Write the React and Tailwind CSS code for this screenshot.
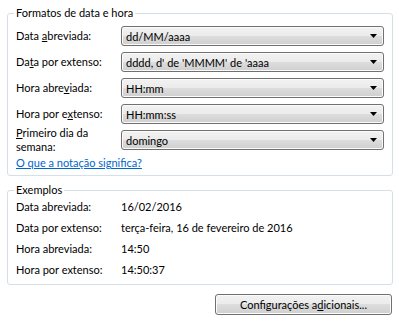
import { Fragment } from 'react';

const formatos = [
  { label: <>Data <u>a</u>breviada:</>, valor: 'dd/MM/aaaa' },
  { label: <>Da<u>t</u>a por extenso:</>, valor: "dddd, d' de 'MMMM' de 'aaaa" },
  { label: <>Hora abre<u>v</u>iada:</>, valor: 'HH:mm' },
  { label: <>Hora por e<u>x</u>tenso:</>, valor: 'HH:mm:ss' },
  { label: <><u>P</u>rimeiro dia da semana:</>, valor: 'domingo' },
];

const exemplos = [
  ['Data abreviada:', '16/02/2016'],
  ['Data por extenso:', 'terça-feira, 16 de fevereiro de 2016'],
  ['Hora abreviada:', '14:50'],
  ['Hora por extenso:', '14:50:37'],
];

function Combo({ valor }) {
  return (
    <div className="relative flex h-[20px] w-[263px] shrink-0 items-center rounded-[3px] border border-[#707070] bg-[linear-gradient(to_bottom,#f2f2f2_0%,#ebebeb_50%,#dddddd_50%,#cfcfcf_100%)] pl-[4px] shadow-[inset_0_0_0_1px_#fbfbfb]">
      <span className="leading-none">{valor}</span>
      <svg className="absolute right-[6px] top-[7px]" width="7" height="4" viewBox="0 0 7 4">
        <path d="M0 0 H7 L3.5 4 Z" fill="#000" />
      </svg>
    </div>
  );
}

export default function App() {
  return (
    <div className="w-[399px] h-[322px] bg-white pl-[7px] pr-[6px] pt-[5px] text-[11px] text-black font-['Lato','Liberation_Sans',sans-serif]">
      <fieldset className="rounded-[3px] border border-[#d5dfe5] pl-[8px] pr-[7px] pb-[4px]">
        <legend className="-ml-[2px] px-[2px] leading-[16px]">Formatos de data e hora</legend>
        <div className="mt-[5px] flex flex-col gap-[6px]">
          {formatos.map((f, i) => (
            <div key={i} className="flex h-[20px] items-center">
              <div className="w-[105px] shrink-0 pr-[10px] leading-[14px]">{f.label}</div>
              <Combo valor={f.valor} />
            </div>
          ))}
        </div>
        <a href="#" className="mt-[5px] block leading-[16px] text-[#0066cc] underline">
          O que a notação significa?
        </a>
      </fieldset>

      <fieldset className="mt-[6px] rounded-[3px] border border-[#d5dfe5] pl-[8px] pr-[7px] pb-[4px]">
        <legend className="-ml-[2px] px-[2px] leading-[16px]">Exemplos</legend>
        <div className="-mt-[2px] grid grid-cols-[105px_1fr]">
          {exemplos.map(([k, v]) => (
            <Fragment key={k}>
              <div className="leading-[21px]">{k}</div>
              <div className="leading-[21px]">{v}</div>
            </Fragment>
          ))}
        </div>
      </fieldset>

      <div className="mt-[9px] flex justify-end pr-[1px]">
        <button className="h-[21px] w-[177px] rounded-[3px] border border-[#707070] bg-[linear-gradient(to_bottom,#f2f2f2_0%,#ebebeb_50%,#dddddd_50%,#cfcfcf_100%)] shadow-[inset_0_0_0_1px_#fbfbfb] leading-none">
          Configurações a<u>d</u>icionais...
        </button>
      </div>
    </div>
  );
}
